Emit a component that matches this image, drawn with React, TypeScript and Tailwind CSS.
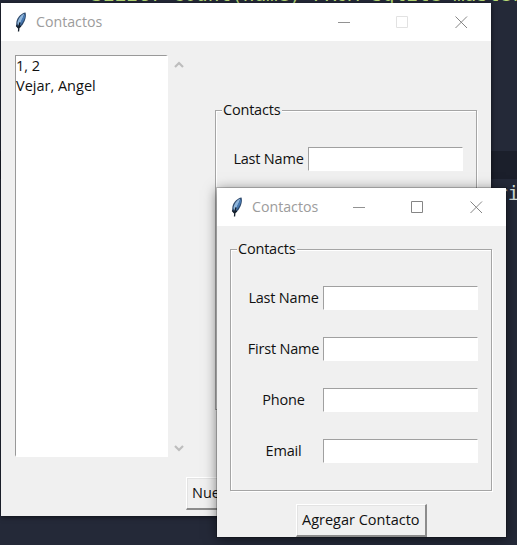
import React from "react";

function Feather() {
  return (
    <svg width="14" height="22" viewBox="0 0 14 22" className="shrink-0">
      <path d="M11.500 1.500C7.500 2 3.500 6 2.500 10.500L2 15L4.300 17L8 14.500C11 10.500 12.700 5.500 11.500 1.500Z" fill="#2b4668" />
      <path d="M10.200 2.600C7 4 4 8 3.400 12L4.200 14.500C7 11.500 9.500 7 10.200 2.600Z" fill="#8fb6dc" />
      <path d="M11.200 2.500C11.700 7 9 11.500 5.500 15C6.500 10.500 8.500 6.500 11.200 2.500Z" fill="#4779b2" />
      <path d="M5.800 11.500C5.200 14 4.700 17 4.500 20.500M2.300 14.500L4.500 17L7 15" stroke="#15202c" strokeWidth="1.300" fill="none" />
    </svg>
  );
}

function TitleBar({ faded = false }: { faded?: boolean }) {
  return (
    <div className="flex h-[38px] shrink-0 items-center bg-white pl-[13px] text-[#929292]">
      <Feather />
      <span className="ml-2 w-[84px] whitespace-nowrap text-[14.2px] leading-5 text-[#9c9c9c]">Contactos</span>
      <div className="ml-auto flex items-center">
        <svg width="13" height="13" viewBox="0 0 13 13" stroke="currentColor" className="mr-[45px]"><path d="M0 6.500H12" /></svg>
        <svg width="13" height="13" viewBox="0 0 13 13" fill="none" stroke={faded ? "#e2e2e2" : "#858585"} className="mr-[46px]"><path d="M.5 .5H11.500V11.500H.5Z" /></svg>
        <svg width="13" height="13" viewBox="0 0 13 13" stroke="#858585" className="mr-[23px]"><path d="M.5 .5L12 12M12 .5L.5 12" /></svg>
      </div>
    </div>
  );
}

function ContactFields({ height }: { height: string }) {
  return (
    <fieldset className={`relative w-[262px] border border-[#a5a5a5] shadow-[1px_1px_0_#fff,inset_1px_1px_0_#fff] ${height}`}>
      <legend className="absolute -top-[11px] left-[6px] bg-[#f0f0f0] pl-px pr-[2px] leading-5 tracking-[-0.2px]">Contacts</legend>
      <div className="flex flex-col gap-[27px] pl-[16px] pt-9">
        {["Last Name", "First Name", "Phone", "Email"].map((label) => (
          <label key={label} className="flex h-6 items-center">
            <span className="flex w-[73px] justify-center whitespace-nowrap tracking-[-0.2px]">{label}</span>
            <input aria-label={label} className="ml-[3px] h-6 w-[155px] border border-b-white border-l-[#a0a0a0] border-r-white border-t-[#a0a0a0] bg-white outline-none" />
          </label>
        ))}
      </div>
    </fieldset>
  );
}

function Button({ children, width }: { children: React.ReactNode; width: string }) {
  return (
    <button className={`flex h-[33px] items-center whitespace-nowrap border-b-2 border-l border-r-2 border-t border-b-[#8c8c8c] border-l-white border-r-[#8c8c8c] border-t-white bg-[#f0f0f0] pl-[5px] shadow-[inset_1px_1px_0_#e3e3e3] ${width}`}>
      {children}
    </button>
  );
}

export default function App() {
  return (
    <main className="relative h-[545px] w-[517px] overflow-hidden bg-[#242938] font-['Open_Sans','Noto_Sans',sans-serif] text-[14.5px] leading-5 text-[#111]">
      <div className="absolute left-0 top-[151px] h-[28px] w-full bg-[#1b1f2b]" />
      <pre className="absolute left-[91px] top-[-17px] font-['DejaVu_Sans_Mono',monospace] text-[19.4px] leading-6 text-[#b9dc78]">SELECT count(name) FROM sqlite_master</pre>
      <pre className="absolute left-[496px] top-[182px] font-['DejaVu_Sans_Mono',monospace] text-[19.4px] leading-6 text-[#d3dedb]">ri</pre>

      <section className="absolute left-px top-[3px] flex h-[513px] w-[490px] flex-col bg-[#f0f0f0] shadow-[0_1px_5px_#0009]">
        <TitleBar faded />
        <div className="flex pl-[14px] pt-[14px]">
          <div className="h-[402px] w-[153px] border-b-2 border-l border-r-2 border-t border-b-white border-l-[#999] border-r-white border-t-[#999] bg-white">
            <div className="leading-[20px]">1, 2</div>
            <div className="leading-[20px]">Vejar, Angel</div>
          </div>
          <div className="ml-[5px] flex w-[12px] flex-col justify-between pb-[5px] pt-[6px]">
            <svg width="12" height="8" viewBox="0 0 12 8" fill="none" stroke="#bdbdbd" strokeWidth="2.200"><path d="M2 6L6 2L10 6" /></svg>
            <svg width="12" height="8" viewBox="0 0 12 8" fill="none" stroke="#bdbdbd" strokeWidth="2.200"><path d="M2 2L6 6L10 2" /></svg>
          </div>
          <div className="ml-[30px] pt-[55px]"><ContactFields height="h-[300px]" /></div>
        </div>
        <div className="ml-[185px] mt-5"><Button width="w-[126px]">Nuevo Contacto</Button></div>
      </section>

      <section className="absolute left-[217px] top-[188px] flex h-[349px] w-[289px] flex-col bg-[#f0f0f0] shadow-[0_0_0_1px_#0003,0_2px_12px_#0008]">
        <TitleBar />
        <div className="flex flex-col pl-[13px] pt-[23px]">
          <ContactFields height="h-[242px]" />
          <div className="ml-[66px] mt-[13px]"><Button width="w-[131px]">Agregar Contacto</Button></div>
        </div>
      </section>
    </main>
  );
}
